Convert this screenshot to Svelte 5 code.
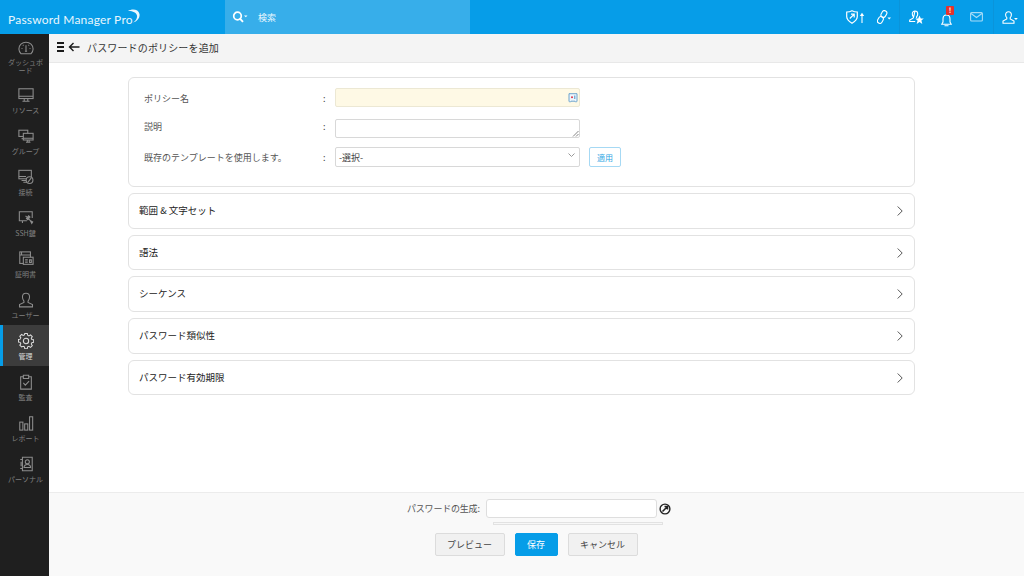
<script>
  const nav = [
    { label: 'ダッシュボード', key: 'dash' },
    { label: 'リソース', key: 'res' },
    { label: 'グループ', key: 'grp' },
    { label: '接続', key: 'con' },
    { label: 'SSH鍵', key: 'ssh' },
    { label: '証明書', key: 'cert' },
    { label: 'ユーザー', key: 'user' },
    { label: '管理', key: 'admin' },
    { label: '監査', key: 'audit' },
    { label: 'レポート', key: 'rep' },
    { label: 'パーソナル', key: 'per' }
  ];
  const sections = ['範囲 & 文字セット', '語法', 'シーケンス', 'パスワード類似性', 'パスワード有効期限'];
</script>

<div class="page">
  <header class="top">
    <div class="brand">
      <span class="brandtext">Password Manager Pro</span>
      <svg class="swoosh" width="13" height="14" viewBox="0 0 13 14" fill="none"><path d="M1 2C5-.5 11.500 0 12.500 5c.6 3.500-2 7.500-6.500 8.500C9 11.500 10.500 9 10 6.500 9.300 3.500 5.500 1.800 1 2z" fill="#eaf7fe"/></svg>
    </div>
    <div class="search">
      <svg width="16" height="12" viewBox="0 0 16 12" fill="none"><circle cx="5.500" cy="5" r="3.800" stroke="#fff" stroke-width="1.700"/><path d="M8.200 7.800l2.800 3" stroke="#fff" stroke-width="1.900"/><path d="M12 4.500h3.500l-1.700 1.800z" fill="#fff"/></svg>
      <span>検索</span>
    </div>
    <div class="topicons">
      <svg class="shield" width="20" height="14" viewBox="0 0 20 14" fill="none"><path d="M.7 2C3 2 4.500 1.500 6 .7 7.500 1.500 9 2 11.300 2v4.500c0 3-2.300 5-5.300 6.800C3 11.500.7 9.500.7 6.500z" stroke="#fff" stroke-width="1.200"/><path d="M3.800 8.500L8 4.300M5 4.200h3.200v3.200" stroke="#fff" stroke-width="1.200"/><path d="M16 13V5" stroke="#d6f0fd" stroke-width="1.300"/><path d="M13.800 6L16 2.800 18.200 6z" fill="#fff"/></svg>
      <svg class="link" width="14" height="14" viewBox="0 0 14 14" fill="none"><rect x="1" y="6.500" width="4.800" height="7" rx="2.400" transform="rotate(30 3.400 10)" stroke="#fff" stroke-width="1.100"/><rect x="4.500" y=".5" width="4.800" height="7" rx="2.400" transform="rotate(30 7 4)" stroke="#fff" stroke-width="1.100"/><path d="M10.500 7.500h3.500L12.200 9.500z" fill="#fff"/></svg>
      <i class="sep s1"></i>
      <svg class="ustar" width="15" height="15" viewBox="0 0 15 15" fill="none"><path d="M6 1c1.700 0 2.700 1.200 2.700 2.900 0 1.300-.6 2.300-1.100 3v1M4.400 7.900V6.900C3.900 6.200 3.300 5.200 3.300 3.900 3.300 2.200 4.300 1 6 1zM4.400 7.900L.7 10v1.500h5.500" stroke="#fff" stroke-width="1.100"/><path d="M10.500 5.500l1.300 3h3l-2.400 2 .9 3.500-2.800-2-2.800 2 .9-3.500-2.400-2h3z" fill="#fff"/></svg>
      <div class="bell">
        <svg width="11" height="14" viewBox="0 0 11 14" fill="none"><path d="M5.500 2C7.800 2 9 3.800 9 6v3l1.300 2.300H.7L2 9V6c0-2.200 1.200-4 3.500-4zM3.500 12.800h4" stroke="#fff" stroke-width="1.100"/></svg>
        <span class="badge">!</span>
      </div>
      <svg class="mail" width="13" height="10" viewBox="0 0 13 10" fill="none"><rect x=".6" y=".6" width="11.800" height="8.400" rx="1" stroke="#a6dcf7" stroke-width="1.100"/><path d="M1 1.500l5.500 4 5.500-4" stroke="#a6dcf7" stroke-width="1.100"/></svg>
      <i class="sep s2"></i>
      <svg class="user" width="16" height="13" viewBox="0 0 16 13" fill="none"><path d="M6.500.7c1.800 0 2.900 1.200 2.900 3 0 1.300-.6 2.400-1.200 3v1.200L12 10v2.300H1V10l3.800-2.100V6.700c-.6-.6-1.200-1.700-1.200-3 0-1.800 1.100-3 2.900-3z" stroke="#fff" stroke-width="1.100"/><path d="M12 7h3.800L14 9z" fill="#fff"/></svg>
    </div>
  </header>

  <div class="body">
    <aside class="side">
      {#each nav as item, i}
        <div class="item" class:first={i === 0} class:active={item.key === 'admin'}>
          <svg class="navicon" width="16" height="16" viewBox="0 0 18 18" fill="none" stroke="currentColor" stroke-width="1.200">
            {#if item.key === 'dash'}
              <path d="M3.500 15.500C2 14 1 12 1 10c0-4.500 3.500-7.500 8-7.500s8 3 8 7.500c0 2-1 4-2.500 5.500z"/><path d="M9 11.500V6M7.800 12.500h2.400M4 9.500h1M13 9.500h1M5.500 5.500l.7.700M12.500 5.500l-.7.700"/>
            {:else if item.key === 'res'}
              <rect x="1" y="2" width="16" height="11"/><path d="M1 10.500h16M7 13v2.500M11 13v2.500M5 16h8"/>
            {:else if item.key === 'grp'}
              <rect x="1" y="2.500" width="10" height="7"/><path d="M4 12h2"/><rect x="6" y="6" width="11" height="7.500" fill="#1f1f1f"/><path d="M6 11.500h11M10.500 13.500v2M12.500 13.500v2M9 16h5"/>
            {:else if item.key === 'con'}
              <rect x="1" y="1.500" width="14" height="9.500"/><path d="M1 8.500h8M4 13h5M6 15h5"/><circle cx="13" cy="12.500" r="3.800" fill="#1f1f1f"/><path d="M11 15l4-5"/>
            {:else if item.key === 'ssh'}
              <path d="M10 12H1.500V2H16v7M5 12v2.500"/><path d="M8.500 6.500l6 6M9.500 9.500l2.500-3 1.500 1.500-2.500 3zM14 12l1.500 3 1-1.500z" fill="currentColor"/>
            {:else if item.key === 'cert'}
              <rect x="2" y="1" width="12" height="13"/><path d="M2 4.500h12M4 1v3.500"/><rect x="6" y="7" width="11" height="8" fill="#1f1f1f"/><path d="M8 10h3M8 12.500h3M13 10h2v3h-2z"/>
            {:else if item.key === 'user'}
              <path d="M9 1.500c2.500 0 4 1.800 4 4.200 0 2-.9 3.500-1.700 4.500v1.500l5 2.500v2.500H1.700v-2.500l5-2.500v-1.500C5.900 9.200 5 7.700 5 5.700 5 3.300 6.500 1.500 9 1.500z"/>
            {:else if item.key === 'admin'}
              <path d="M7.500 1h3l.4 2.200 1.500.7 1.900-1.200 2.100 2.100-1.200 1.900.7 1.500 2.100.4v3l-2.100.4-.7 1.500 1.200 1.900-2.100 2.100-1.900-1.200-1.500.7-.4 2.100h-3l-.4-2.100-1.500-.7L3.700 17 1.600 15l1.200-1.900L2 11.600 0 11.200v-3l2-.4.800-1.500-1.200-1.900 2.100-2.100 1.900 1.200 1.500-.7z" transform="translate(.5 -.5) scale(.95)"/><circle cx="9" cy="9" r="3"/>
            {:else if item.key === 'audit'}
              <path d="M6 3H3v14h12V3h-3"/><path d="M6 1.500h6V5H6zM6 10l2.200 2.500L12.500 8"/>
            {:else if item.key === 'rep'}
              <rect x="2" y="8" width="3.500" height="9"/><rect x="7.500" y="10" width="3.500" height="7"/><rect x="13" y="2" width="3.500" height="15"/>
            {:else}
              <path d="M5 1.500h11v15H5zM5 4H2.500M5 14H2.500M3.500 6.500v5"/><circle cx="10.500" cy="6.500" r="2.300"/><path d="M6.800 13c0-2 1.500-3.500 3.700-3.500s3.700 1.500 3.700 3.500z"/>
            {/if}
          </svg>
          <span class="navlabel">{item.label}</span>
        </div>
      {/each}
    </aside>

    <main class="main">
      <div class="sub">
        <div class="burger"><i></i><i></i><i></i></div>
        <svg class="back" width="12" height="10" viewBox="0 0 12 10" fill="none"><path d="M11.500 5H1.500M5.500 1L1.500 5l4 4" stroke="#1a1a1a" stroke-width="1.400"/></svg>
        <h1>パスワードのポリシーを追加</h1>
      </div>

      <div class="content">
        <div class="card form">
          <div class="row r1">
            <label>ポリシー名</label><span class="colon">:</span>
            <div class="field yellow">
              <svg class="tag" width="10" height="10" viewBox="0 0 10 10" fill="none"><path d="M1 .7h8v7.500l-1 1-1-1H3l-1 1-1-1z" fill="#eef6fc" stroke="#4a8fc4" stroke-width=".8"/><circle cx="4" cy="4.300" r="1" fill="#d9364a"/><path d="M6.800 2.500v3.500" stroke="#4a8fc4"/></svg>
            </div>
          </div>
          <div class="row r2">
            <label>説明</label><span class="colon">:</span>
            <div class="field area">
              <svg class="grip" width="7" height="7" viewBox="0 0 7 7"><path d="M1 6.500L6.500 1M4 6.500L6.500 4" stroke="#666" stroke-width=".8"/></svg>
            </div>
          </div>
          <div class="row r3">
            <label>既存のテンプレートを使用します。</label><span class="colon">:</span>
            <div class="field sel">
              <span>-選択-</span>
              <svg width="7" height="5" viewBox="0 0 7 5" fill="none"><path d="M.5.500L3.500 3.500 6.500.500" stroke="#999"/></svg>
            </div>
            <button class="apply">適用</button>
          </div>
        </div>

        {#each sections as s}
          <div class="card sec">
            <span>{s}</span>
            <svg width="6" height="10" viewBox="0 0 6 10" fill="none"><path d="M.7.500L5.200 5 .7 9.500" stroke="#555"/></svg>
          </div>
        {/each}
      </div>

      <footer class="foot">
        <div class="gen">
          <span class="genlabel">パスワードの生成:</span>
          <div class="genwrap">
            <div class="genfield"></div>
            <div class="meter"></div>
          </div>
          <svg class="genicon" width="12" height="12" viewBox="0 0 12 12" fill="none"><circle cx="6" cy="6" r="4.900" stroke="#222" stroke-width="1.400"/><path d="M3.500 8.500L8 4M5.500 3.500H8.500V6.500" stroke="#222" stroke-width="1.500"/></svg>
        </div>
        <div class="btns">
          <button class="btn">プレビュー</button>
          <button class="btn primary">保存</button>
          <button class="btn">キャンセル</button>
        </div>
      </footer>
    </main>
  </div>
</div>

<style>
  :global(body) { margin: 0; font-family: "Noto Sans CJK JP", "Noto Sans", sans-serif; }
  .page { width: 1024px; height: 576px; display: flex; flex-direction: column; overflow: hidden; background: #fff; }
  .top { height: 34px; flex: none; background: #069de8; display: flex; align-items: stretch; color: #fff; }
  .brand { width: 225px; flex: none; display: flex; align-items: center; padding-left: 8px; box-sizing: border-box; }
  .brandtext { font-family: "Lato", "Noto Sans", sans-serif; font-size: 12px; font-weight: 400; color: #e8f6fd; letter-spacing: .2px; margin-top: 4px; }
  .swoosh { margin-left: -6px; margin-top: -3px; }
  .search { width: 245px; flex: none; background: #37aeea; display: flex; align-items: center; padding-left: 7px; box-sizing: border-box; }
  .search span { font-size: 9px; margin-left: 10px; color: #eaf7fe; }
  .topicons { flex: 1; display: flex; align-items: center; padding-left: 376px; }
  .topicons svg { flex: none; }
  .link { margin-left: 11px; }
  .sep { width: 1px; height: 34px; background: #0a94da; flex: none; }
  .s1 { margin: 0 9px 0 8px; }
  .s2 { margin: 0 8px 0 10px; }
  .bell { position: relative; width: 11px; height: 14px; margin-left: 17px; align-self: flex-start; margin-top: 8px; }
  .badge { position: absolute; left: 5px; top: -2px; width: 8px; height: 9px; background: #e5322d; border-radius: 1px; font-size: 7px; line-height: 9px; font-weight: 700; text-align: center; color: #fff; }
  .mail { margin-left: 18px; }

  .body { flex: 1; display: flex; min-height: 0; }
  .side { width: 49px; flex: none; background: #1f1f1f; display: flex; flex-direction: column; color: #8d8d8d; }
  .item { height: 41px; flex: none; display: flex; flex-direction: column; align-items: center; padding-top: 8px; box-sizing: border-box; border-left: 3px solid transparent; }
  .navlabel { font-size: 7px; line-height: 7.500px; text-align: center; margin-top: 3.500px; width: 36px; margin-left: -1px; color: #808080; }
  .navicon { margin-left: -1px; }
  .first { height: 45px; padding-top: 6px; }
  .first .navlabel { margin-top: 3px; }
  .active { background: #3c3c3c; border-left-color: #069de8; color: #dcdcdc; }
  .active .navlabel { color: #d8d8d8; }

  .main { flex: 1; display: flex; flex-direction: column; min-width: 0; }
  .sub { height: 29px; flex: none; background: #f4f4f4; border-bottom: 1px solid #e8e8e8; display: flex; align-items: center; padding: 0 0 2px 8px; box-sizing: border-box; }
  .burger { width: 7px; display: flex; flex-direction: column; gap: 2.500px; }
  .burger i { display: block; height: 1.500px; background: #1a1a1a; }
  .back { margin-left: 4px; }
  h1 { margin: 0 0 0 7px; font-size: 10px; font-weight: 400; color: #333; letter-spacing: .15px; }

  .content { flex: 1; padding: 14px 109px 0 79px; display: flex; flex-direction: column; gap: 6px; }
  .card { border: 1px solid #e2e2e2; border-radius: 6px; box-sizing: border-box; background: #fff; }
  .form { height: 110px; padding: 10px 15px 0; }
  .row { display: flex; }
  .row label { width: 179px; font-size: 9px; color: #555; }
  .colon { width: 12px; font-size: 9px; color: #444; }
  .r1 { height: 19px; align-items: center; }
  .r1 label, .r1 .colon { padding-top: 2px; }
  .r2 { height: 19px; margin-top: 12px; align-items: flex-start; }
  .r2 label, .r2 .colon { line-height: 15px; }
  .r3 { height: 20px; margin-top: 9px; align-items: center; }
  .field { width: 245px; height: 19px; box-sizing: border-box; border: 1px solid #d8d8d8; border-radius: 2px; position: relative; background: #fff; }
  .yellow { background: #fef9e5; border-color: #ece8d4; }
  .tag { position: absolute; right: 1px; top: 4px; }
  .grip { position: absolute; right: 0; bottom: 0; }
  .r3 .field { height: 20px; }
  .sel { display: flex; align-items: center; justify-content: space-between; padding: 0 4px 0 3px; }
  .sel span { font-size: 9px; color: #444; }
  .sel svg { margin-top: -4px; }
  .apply { margin-left: 9px; width: 32px; height: 20px; box-sizing: border-box; background: #fff; border: 1px solid #a6d9f4; border-radius: 2px; color: #2da5e4; font: 8px "Noto Sans CJK JP", sans-serif; padding: 0; }
  .sec { height: 35.700px; display: flex; align-items: center; justify-content: space-between; padding: 0 11px 0 10px; font-size: 9.500px; font-weight: 400; color: #222; }
  .sec span { margin-top: -2px; }

  .foot { height: 84px; flex: none; background: #f9f9f9; border-top: 1px solid #ececec; box-sizing: border-box; padding-top: 6px; }
  .gen { display: flex; align-items: flex-start; padding-left: 358px; }
  .genlabel { font-size: 9px; color: #555; line-height: 19px; width: 79px; letter-spacing: -.2px; }
  .genwrap { width: 171px; flex: none; }
  .genfield { height: 19px; box-sizing: border-box; background: #fff; border: 1px solid #dedede; border-radius: 3px; }
  .meter { width: 170px; height: 3px; margin: 4px 0 0 7px; border: 1px solid #e2e2e2; background: #f7f7f7; box-sizing: border-box; }
  .genicon { margin: 4px 0 0 2px; }
  .btns { display: flex; justify-content: center; gap: 10px; margin-top: 8px; padding-right: 1px; }
  .btn { height: 23px; box-sizing: border-box; border: 1px solid #dcdcdc; border-radius: 2px; background: #f1f1f1; font: 9px "Noto Sans CJK JP", sans-serif; color: #444; padding: 0; width: 70px; }
  .primary { width: 43px; background: #069de8; border-color: #069de8; color: #fff; }
</style>
